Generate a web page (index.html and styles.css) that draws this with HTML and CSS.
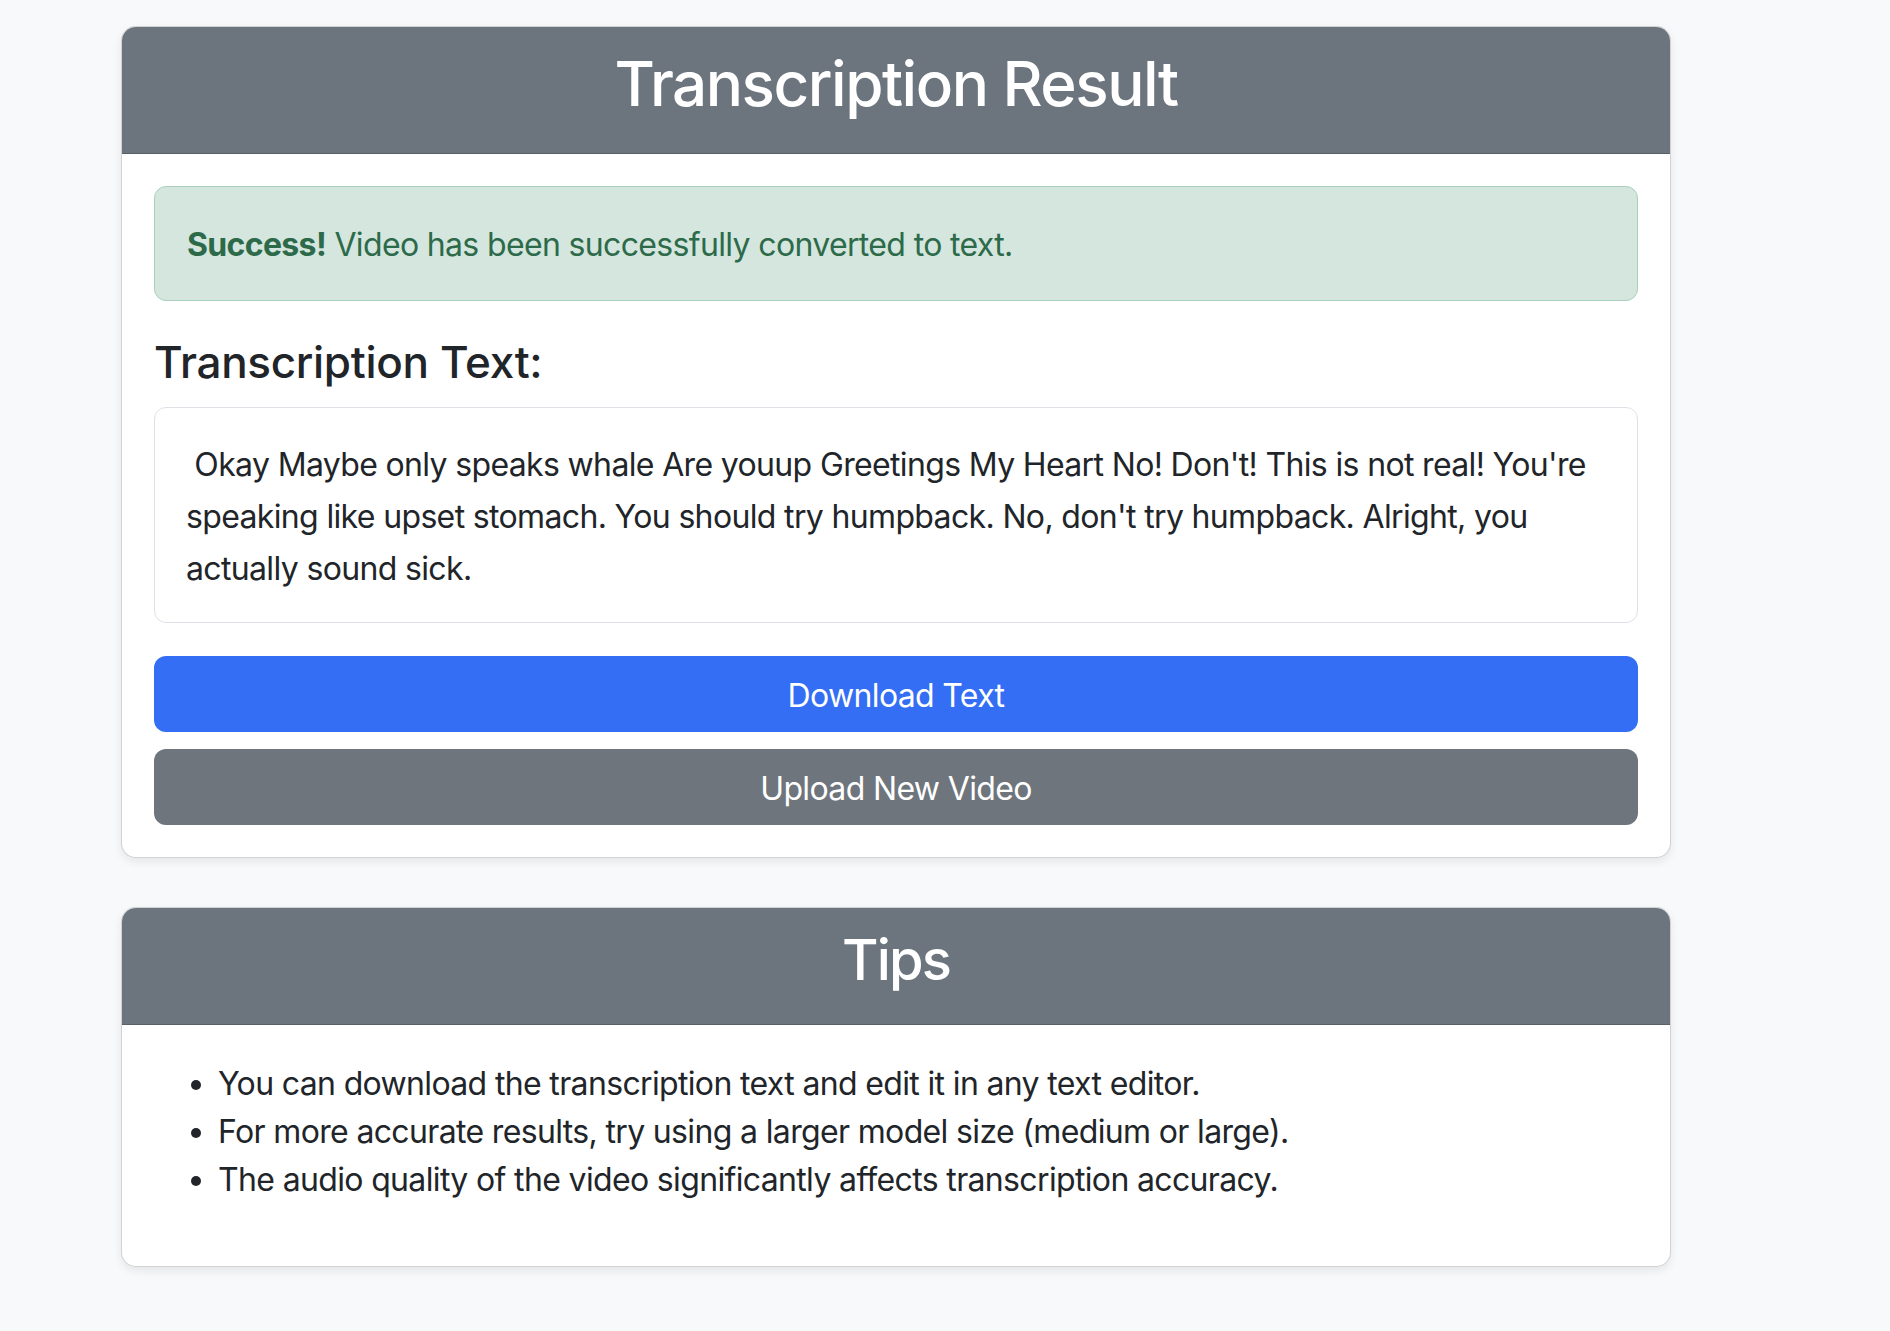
FILE: index.html
```html
<!DOCTYPE html>
<html lang="en">
<head>
<meta charset="utf-8">
<title>Transcription Result</title>
<link rel="stylesheet" href="styles.css">
</head>
<body>
<main class="page">
  <section class="card">
    <header class="card-header">
      <h1 class="title">Transcription Result</h1>
    </header>
    <div class="card-body">
      <div class="alert"><strong>Success!</strong> Video has been successfully converted to text.</div>
      <h4 class="subhead">Transcription Text:</h4>
      <div class="transcript"> Okay Maybe only speaks whale Are youup Greetings My Heart No! Don't! This is not real! You're speaking like upset stomach. You should try humpback. No, don't try humpback. Alright, you actually sound sick.</div>
      <div class="actions">
        <a class="btn btn-primary" href="#">Download Text</a>
        <a class="btn btn-secondary" href="#">Upload New Video</a>
      </div>
    </div>
  </section>
  <section class="card">
    <header class="card-header card-header-sm">
      <h2 class="title title-sm">Tips</h2>
    </header>
    <div class="card-body">
      <ul class="tips">
        <li>You can download the transcription text and edit it in any text editor.</li>
        <li>For more accurate results, try using a larger model size (medium or large).</li>
        <li>The audio quality of the video significantly affects transcription accuracy.</li>
      </ul>
    </div>
  </section>
</main>
</body>
</html>
```
FILE: styles.css
```css
* { box-sizing: border-box; }
html, body { margin: 0; padding: 0; }
body {
  background: #f8f9fa;
  color: #212529;
  font-family: Inter, "Noto Sans", "Liberation Sans", sans-serif;
  font-size: 32px;
  line-height: 1.5;
  letter-spacing: -0.65px;
}
.page {
  padding: 26px 0 40px 121px;
  display: flex;
  flex-direction: column;
  gap: 49px;
  width: 1671px;
}
.card {
  background: #fff;
  border: 1px solid rgba(0,0,0,0.175);
  border-radius: 15px;
  box-shadow: 0 4px 10px rgba(0,0,0,0.08);
  overflow: hidden;
}
.card-header {
  background: #6c757d;
  color: #fff;
  padding: 10px 32px 22px;
  border-bottom: 1px solid rgba(0,0,0,0.175);
  text-align: center;
}
.card-header-sm {
  padding: 10px 32px 22px;
}
.title {
  margin: 0;
  font-size: 62px;
  font-weight: 500;
  line-height: 94px;
  letter-spacing: -1.5px;
}
.title-sm {
  font-size: 56px;
  line-height: 84px;
  letter-spacing: -1.8px;
}
.card-body {
  padding: 32px;
}
.alert {
  background: #d4e6de;
  border: 1px solid #a8d0bd;
  color: #2d6a4a;
  border-radius: 12px;
  padding: 34px 32px 31px;
  margin-bottom: 32px;
  line-height: 48px;
}
.alert strong { font-weight: 700; }
.subhead {
  margin: 0 0 16px;
  font-size: 44px;
  font-weight: 500;
  line-height: 58px;
  letter-spacing: -0.3px;
}
.transcript {
  border: 1px solid #dee2e6;
  border-radius: 12px;
  padding: 31px 31px 27px;
  line-height: 52px;
  white-space: pre-wrap;
  margin-bottom: 33px;
}
.actions {
  display: flex;
  flex-direction: column;
  gap: 17px;
}
.btn {
  display: block;
  text-align: center;
  text-decoration: none;
  color: #fff;
  border-radius: 12px;
  padding: 15px 24px 12px;
  line-height: 49px;
}
.btn-primary { background: #336ef5; }
.btn-secondary { background: #6e757c; }
.tips {
  margin: 3px 0 30px;
  padding-left: 64px;
  line-height: 48px;
}
```
